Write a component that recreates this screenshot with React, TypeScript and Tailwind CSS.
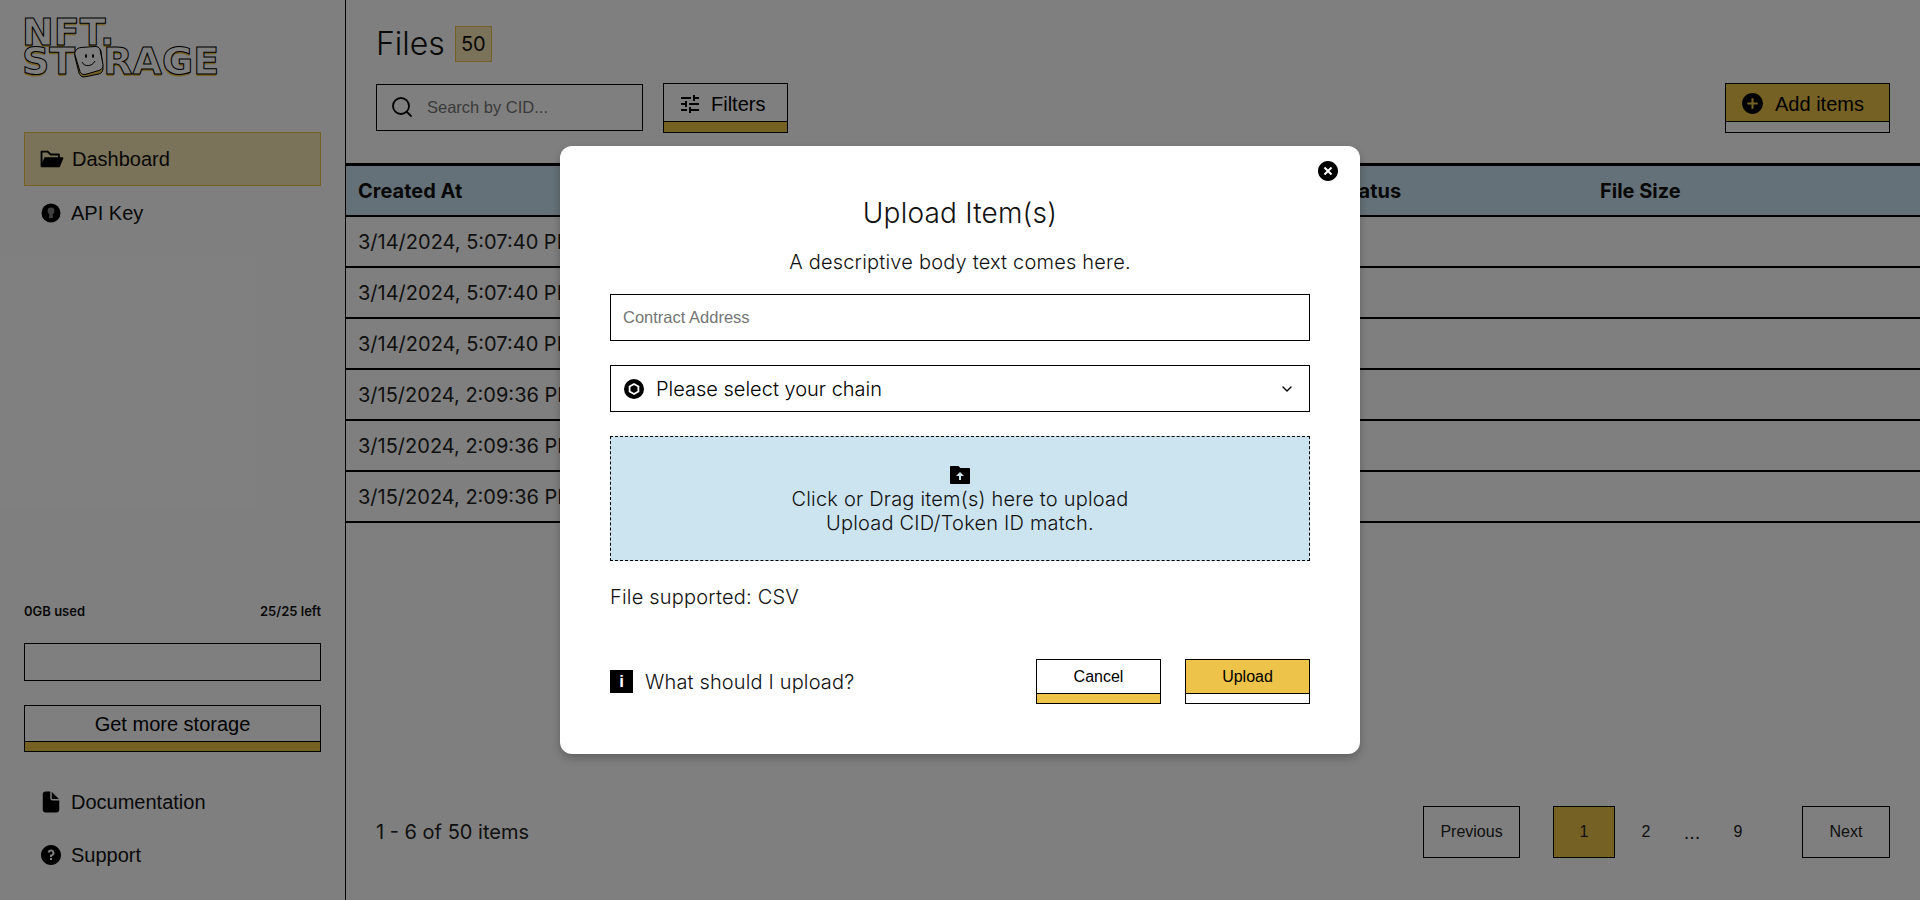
import type { FC, ReactNode } from "react";
import { ChevronDown, Search } from "lucide-react";
import {
  RiAddCircleFill,
  RiCloseCircleFill,
  RiFolderUploadFill,
  RiQuestionFill,
} from "react-icons/ri";
import { AiFillFolderOpen } from "react-icons/ai";
import { IoDocument } from "react-icons/io5";
import { MdTune } from "react-icons/md";

const rows = [
  "3/14/2024, 5:07:40 PM",
  "3/14/2024, 5:07:40 PM",
  "3/14/2024, 5:07:40 PM",
  "3/15/2024, 2:09:36 PM",
  "3/15/2024, 2:09:36 PM",
  "3/15/2024, 2:09:36 PM",
];

const KeyIcon = () => (
  <svg width="20" height="20" viewBox="0 0 20 20">
    <circle cx="10" cy="10" r="9.5" fill="#000" />
    <circle cx="10" cy="8" r="3.4" fill="#808080" />
    <path d="M8.6 9h2.8l.6 6H8z" fill="#808080" />
  </svg>
);

const ChainIcon = () => (
  <svg width="20" height="20" viewBox="0 0 20 20">
    <circle cx="10" cy="10" r="10" fill="#000" />
    <path d="M10 5l4.4 2.5v5L10 15l-4.4-2.5v-5z" fill="none" stroke="#fff" strokeWidth="1.8" />
  </svg>
);

const Smiley = () => (
  <svg width="30" height="32" viewBox="0 0 30 32" className="mx-[-1px] mt-[-1px] shrink-0">
    <path d="M7 3l15-2c3 0 4 2 5 4l2 17c0 3-1 5-4 6l-15 3c-3 0-4-2-5-4L1 11c-1-4 2-7 6-8z" fill="#edc34a" stroke="#000" />
    <path d="M7 1.500l14-1c3 0 4 1 5 3l3 15c0 3-1 5-4 6l-14 4c-3 0-4-1-5-3L1 9c-1-4 2-7 6-7.500z" fill="#fff" stroke="#000" />
    <ellipse cx="12" cy="10" rx="1" ry="2" fill="#000" />
    <ellipse cx="19" cy="10" rx="1" ry="2" fill="#000" />
    <path d="M8 16c2 5 10 5 13-1" fill="none" stroke="#000" strokeWidth="1" />
  </svg>
);

const logoText =
  "font-['DejaVu_Sans'] font-bold text-white text-[38px] leading-[29px] tracking-[0px] [-webkit-text-stroke:1px_#000] [text-shadow:0_2px_0_#edc34a]";

const Logo = () => (
  <div className="ml-[-2px] flex h-[60px] flex-col select-none">
    <div className={logoText}>NFT.</div>
    <div className={`flex items-start ${logoText}`}>
      <span>ST</span>
      <Smiley />
      <span>RAGE</span>
    </div>
  </div>
);

const NavItem: FC<{ icon: ReactNode; label: string; active?: boolean; h?: string }> = ({ icon, label, active, h }) => (
  <div
    className={`flex items-center gap-[10px] pl-[17px] text-[20px] text-[#111] ${h ?? "h-[54px]"} ${
      active ? "border border-[#edc34a] bg-[#f4e4b2]" : ""
    }`}
  >
    <span className="flex w-[20px] justify-center text-black">{icon}</span>
    {label}
  </div>
);

const BarButton: FC<{
  children: ReactNode;
  top: string;
  bottom: string;
  className: string;
  barH: string;
}> = ({ children, top, bottom, className, barH }) => (
  <button className={`flex flex-col border border-black text-black ${className}`}>
    <span className={`flex w-full flex-1 items-center border-b border-black ${top}`}>{children}</span>
    <span className={`block w-full ${barH} ${bottom}`} />
  </button>
);

const Sidebar = () => (
  <aside className="flex h-[900px] w-[346px] shrink-0 flex-col border-r border-black px-[24px] pt-[18px] font-['Liberation_Sans',sans-serif]">
    <Logo />
    <nav className="mt-[54px]">
      <NavItem active icon={<AiFillFolderOpen size={26} className="shrink-0" />} label="Dashboard" />
      <NavItem icon={<KeyIcon />} label="API Key" />
    </nav>
    <div className="mt-auto">
      <div className="flex h-[16px] items-center justify-between font-['Inter',sans-serif] text-[13px] font-semibold text-[#111]">
        <span>0GB used</span>
        <span>25/25 left</span>
      </div>
      <div className="mt-[23px] h-[38px] border border-black" />
      <BarButton className="mt-[24px] h-[47px] w-full text-[20px]" top="justify-center bg-white" bottom="bg-[#edc34a]" barH="h-[9px]">
        Get more storage
      </BarButton>
      <div className="mt-[23px] pb-[19px]">
        <NavItem h="h-[53px]" icon={<IoDocument size={24} className="shrink-0" />} label="Documentation" />
        <NavItem h="h-[53px]" icon={<RiQuestionFill size={24} className="shrink-0" />} label="Support" />
      </div>
    </div>
  </aside>
);

const Main = () => (
  <main className="flex h-[900px] min-w-0 flex-1 flex-col pt-[26px] font-['Inter',sans-serif]">
    <div className="flex h-[36px] items-center gap-[10px] pl-[30px]">
      <h1 className="text-[32px] font-light text-[#111]">Files</h1>
      <span className="flex h-[36px] w-[37px] items-center justify-center border border-[#edc34a] bg-[#f4e4b2] text-[20px] text-[#111]">
        50
      </span>
    </div>
    <div className="mt-[21px] flex h-[50px] items-center pl-[30px] pr-[30px] font-['Liberation_Sans',sans-serif]">
      <label className="mb-[2px] flex h-[47px] w-[267px] items-center border border-black bg-white pl-[13px]">
        <Search size={24} strokeWidth={1.8} className="shrink-0 text-black" />
        <input
          placeholder="Search by CID..."
          className="ml-[13px] w-[200px] bg-transparent text-[16.5px] outline-none placeholder:text-[#757575]"
        />
      </label>
      <BarButton className="ml-[20px] h-[50px] w-[125px] text-[20px]" top="gap-[9px] bg-white pl-[14px] pt-[2px]" bottom="bg-[#edc34a]" barH="h-[10px]">
        <MdTune size={24} />
        Filters
      </BarButton>
      <BarButton className="ml-auto h-[50px] w-[165px] text-[20px]" top="gap-[10px] bg-[#edc34a] pl-[14px] pt-[2px]" bottom="bg-white" barH="h-[10px]">
        <RiAddCircleFill size={25} />
        Add items
      </BarButton>
    </div>
    <div className="mt-[30px]">
      <div className="grid h-[54px] grid-cols-[980px_262px_1fr] items-center border-t-[3px] border-b-2 border-black bg-[#cbe3f0] px-[12px] text-[20px] font-bold text-[#111]">
        <span>Created At</span>
        <span>Status</span>
        <span>File Size</span>
      </div>
      {rows.map((created, i) => (
        <div key={i} className="flex h-[51px] items-center border-b-2 border-black px-[12px] text-[20px] text-[#222]">
          {created}
        </div>
      ))}
    </div>
    <div className="mt-auto mb-[42px] flex items-center pl-[30px] pr-[30px]">
      <span className="text-[20px] text-[#222]">1 - 6 of 50 items</span>
      <div className="ml-auto flex items-center font-['Liberation_Sans',sans-serif] text-[16px] text-[#222]">
        <span className="flex h-[52px] w-[97px] items-center justify-center border border-black">Previous</span>
        <span className="ml-[33px] flex h-[52px] w-[62px] items-center justify-center border border-black bg-[#edc34a]">1</span>
        <span className="flex w-[62px] justify-center">2</span>
        <span className="flex w-[30px] justify-center text-[20px]">...</span>
        <span className="flex w-[62px] justify-center">9</span>
        <span className="ml-[33px] flex h-[52px] w-[88px] items-center justify-center border border-black">Next</span>
      </div>
    </div>
  </main>
);

const UploadModal = () => (
  <div className="absolute inset-0 flex items-center justify-center bg-black/50">
    <div className="relative h-[608px] w-[800px] rounded-[12px] bg-white px-[50px] pt-[48px] font-['Inter',sans-serif] text-[#111] shadow-[0_4px_8px_rgba(0,0,0,0.25)]">
      <button className="absolute top-[13px] right-[20px] text-black">
        <RiCloseCircleFill size={24} />
      </button>
      <h2 className="text-center text-[28px] leading-[38px] font-light tracking-[0.2px]">Upload Item(s)</h2>
      <p className="mt-[18px] text-center text-[20px] leading-[24px] font-light tracking-[0.2px]">
        A descriptive body text comes here.
      </p>
      <input
        placeholder="Contract Address"
        className="mt-[20px] h-[47px] w-full border border-black px-[12px] font-['Liberation_Sans',sans-serif] text-[16.5px] outline-none placeholder:text-[#757575]"
      />
      <div className="mt-[24px] flex h-[47px] items-center border border-black pr-[14px] pl-[13px] text-[20px] font-light text-black">
        <ChainIcon />
        <span className="ml-[12px]">Please select your chain</span>
        <ChevronDown size={16} className="ml-auto" />
      </div>
      <div className="mt-[24px] flex h-[125px] flex-col items-center justify-center border border-dashed border-black bg-[#cce4f0] text-[20px] leading-[24px] font-light tracking-[0.2px]">
        <RiFolderUploadFill size={24} className="text-black" />
        <span>Click or Drag item(s) here to upload</span>
        <span>Upload CID/Token ID match.</span>
      </div>
      <p className="mt-[24px] text-[20px] leading-[24px] font-light tracking-[0.2px]">File supported: CSV</p>
      <div className="mt-[50px] flex items-center">
        <span className="flex h-[23px] w-[23px] items-center justify-center bg-black font-['Liberation_Sans',sans-serif] text-[17px] font-bold text-white">
          i
        </span>
        <span className="ml-[12px] text-[20px] font-light tracking-[0.15px]">What should I upload?</span>
        <div className="ml-auto flex gap-[24px] font-['Liberation_Sans',sans-serif] text-[16px]">
          <BarButton className="h-[45px] w-[125px]" top="justify-center bg-white" bottom="bg-[#edc34a]" barH="h-[9px]">
            Cancel
          </BarButton>
          <BarButton className="h-[45px] w-[125px]" top="justify-center bg-[#edc34a]" bottom="bg-white" barH="h-[9px]">
            Upload
          </BarButton>
        </div>
      </div>
    </div>
  </div>
);

export default function App() {
  return (
    <div className="relative flex h-[900px] w-[1920px] overflow-hidden bg-white">
      <Sidebar />
      <Main />
      <UploadModal />
    </div>
  );
}
